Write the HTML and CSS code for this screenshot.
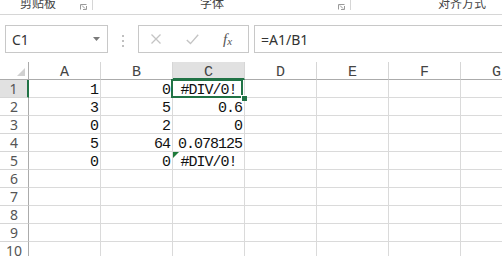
FILE: index.html
```html
<!DOCTYPE html>
<html lang="zh">
<head>
<meta charset="utf-8">
<link rel="stylesheet" href="styles.css">
</head>
<body>
<div class="ribbon">
  <div class="group g1">
    <span class="label">剪贴板</span>
    <svg class="launcher" width="7" height="6" viewBox="0 0 7 6"><path d="M0.5 5.5V0.5H6.5" fill="none" stroke="#9a9a9a"/><path d="M2 1.5L5 4.5" stroke="#9a9a9a"/><path d="M3 5.5H6.5V2" fill="none" stroke="#9a9a9a"/></svg>
  </div>
  <div class="group g2">
    <span class="label">字体</span>
    <svg class="launcher" width="7" height="6" viewBox="0 0 7 6"><path d="M0.5 5.5V0.5H6.5" fill="none" stroke="#9a9a9a"/><path d="M2 1.5L5 4.5" stroke="#9a9a9a"/><path d="M3 5.5H6.5V2" fill="none" stroke="#9a9a9a"/></svg>
  </div>
  <div class="group g3">
    <span class="label">对齐方式</span>
  </div>
</div>

<div class="fbar">
  <div class="namebox">
    <span>C1</span>
    <svg class="caret" width="7" height="4" viewBox="0 0 7 4"><path d="M0 0H7L3.5 4Z" fill="#7a7a7a"/></svg>
  </div>
  <div class="grip"><i></i><i></i><i></i></div>
  <div class="btns">
    <svg width="12" height="10" viewBox="0 0 12 10"><path d="M1.5 0.5L10.5 9.5M10.5 0.5L1.5 9.5" stroke="#c4c4c4" stroke-width="1.3"/></svg>
    <svg width="13" height="11" viewBox="0 0 13 11"><path d="M0.8 6L4.5 9.6L12.2 0.8" fill="none" stroke="#c4c4c4" stroke-width="1.4"/></svg>
    <span class="fx">f<sub>x</sub></span>
  </div>
  <div class="formula">=A1/B1</div>
</div>

<div class="sheet">
  <div class="corner"><span class="tri"></span></div>
  <div class="ch">A</div><div class="ch">B</div><div class="ch sel">C</div><div class="ch">D</div><div class="ch">E</div><div class="ch">F</div><div class="ch">G</div>

  <div class="rh sel">1</div>
  <div class="c num">1</div><div class="c num">0</div><div class="c err active">#DIV/0!<span class="handle"></span></div><div class="c"></div><div class="c"></div><div class="c"></div><div class="c"></div>

  <div class="rh">2</div>
  <div class="c num">3</div><div class="c num">5</div><div class="c num">0.6</div><div class="c"></div><div class="c"></div><div class="c"></div><div class="c"></div>

  <div class="rh">3</div>
  <div class="c num">0</div><div class="c num">2</div><div class="c num">0</div><div class="c"></div><div class="c"></div><div class="c"></div><div class="c"></div>

  <div class="rh">4</div>
  <div class="c num">5</div><div class="c num">64</div><div class="c num">0.078125</div><div class="c"></div><div class="c"></div><div class="c"></div><div class="c"></div>

  <div class="rh">5</div>
  <div class="c num">0</div><div class="c num">0</div><div class="c err flag">#DIV/0!</div><div class="c"></div><div class="c"></div><div class="c"></div><div class="c"></div>

  <div class="rh">6</div>
  <div class="c"></div><div class="c"></div><div class="c"></div><div class="c"></div><div class="c"></div><div class="c"></div><div class="c"></div>
  <div class="rh">7</div>
  <div class="c"></div><div class="c"></div><div class="c"></div><div class="c"></div><div class="c"></div><div class="c"></div><div class="c"></div>
  <div class="rh">8</div>
  <div class="c"></div><div class="c"></div><div class="c"></div><div class="c"></div><div class="c"></div><div class="c"></div><div class="c"></div>
  <div class="rh">9</div>
  <div class="c"></div><div class="c"></div><div class="c"></div><div class="c"></div><div class="c"></div><div class="c"></div><div class="c"></div>
  <div class="rh">10</div>
  <div class="c"></div><div class="c"></div><div class="c"></div><div class="c"></div><div class="c"></div><div class="c"></div><div class="c"></div>
</div>
</body>
</html>
```

FILE: styles.css
```css
html, body {
  margin: 0;
  padding: 0;
  background: #fff;
  overflow: hidden;
  width: 502px;
  height: 256px;
}

body {
  font-family: "Noto Sans", "Noto Sans CJK SC", sans-serif;
  color: #333;
}

/* ribbon strip */
.ribbon {
  display: flex;
  height: 15px;
  border-bottom: 1px solid #d6d6d6;
  box-sizing: border-box;
  overflow: hidden;
}

.group {
  position: relative;
  display: flex;
  align-items: flex-start;
  height: 14px;
  box-sizing: border-box;
}

.group .label {
  font-family: "Noto Sans CJK SC", sans-serif;
  font-size: 12px;
  line-height: 12px;
  color: #444;
  margin-top: -3px;
}

.g1 {
  width: 93px;
  padding-left: 20px;
  border-right: 1px solid #d6d6d6;
  height: 10px;
}

.g2 {
  width: 258px;
  padding-left: 107px;
  border-right: 1px solid #d6d6d6;
  height: 10px;
}

.g3 {
  flex: 1;
  padding-left: 87px;
}

.launcher {
  margin-left: auto;
  margin-right: 5px;
  margin-top: 4px;
}

/* formula bar */
.fbar {
  display: flex;
  height: 28px;
  margin-top: 10px;
}

.namebox {
  width: 103px;
  margin-left: 5px;
  border: 1px solid #c8c8c8;
  box-sizing: border-box;
  display: flex;
  align-items: center;
  padding-left: 6px;
  padding-right: 7px;
  font-size: 14px;
}

.namebox .caret {
  margin-left: auto;
}

.grip {
  width: 30px;
  display: flex;
  flex-direction: column;
  align-items: center;
  justify-content: center;
  gap: 3px;
  padding-top: 3px;
  box-sizing: border-box;
}

.grip i {
  width: 2px;
  height: 2px;
  background: #c0c0c0;
}

.btns {
  width: 111px;
  border: 1px solid #c8c8c8;
  box-sizing: border-box;
  display: flex;
  align-items: center;
  padding-left: 11px;
  gap: 24px;
}

.fx {
  font-family: "Liberation Serif", serif;
  font-style: italic;
  font-size: 15px;
  color: #555;
  margin-left: 0px;
}

.fx sub {
  font-size: 11px;
  vertical-align: -1px;
}

.formula {
  flex: 1;
  margin-left: 5px;
  margin-right: -3px;
  border: 1px solid #c8c8c8;
  box-sizing: border-box;
  display: flex;
  align-items: center;
  padding-left: 6px;
  font-size: 14px;
}

/* sheet grid */
.sheet {
  display: grid;
  grid-template-columns: 29px repeat(7, 72px);
  grid-auto-rows: 18px;
  margin-top: 9px;
}

.sheet > div {
  box-sizing: border-box;
  border-right: 1px solid #dadada;
  border-bottom: 1px solid #dadada;
  position: relative;
  white-space: nowrap;
}

.corner {
  border-right-color: #ababab !important;
  border-bottom-color: #ababab !important;
}

.corner .tri {
  position: absolute;
  right: 3px;
  bottom: 3px;
  width: 0;
  height: 0;
  border-left: 8px solid transparent;
  border-bottom: 8px solid #d0d0d0;
}

.ch {
  text-align: center;
  font-family: "Liberation Mono", monospace;
  font-size: 15px;
  line-height: 18px;
  padding-top: 2px;
  color: #444;
  border-bottom-color: #ababab !important;
  border-right-color: #d6d6d6 !important;
}

.ch.sel {
  background: #e1e1e1;
  border-bottom: 2px solid #217346 !important;
}

.rh {
  text-align: center;
  font-family: "Noto Sans", sans-serif;
  font-size: 14px;
  line-height: 17px;
  color: #555;
  border-right-color: #ababab !important;
  border-bottom-color: #d6d6d6 !important;
}

.rh.sel {
  background: #e1e1e1;
  border-right: 2px solid #217346 !important;
}

.c {
  font-family: "Liberation Mono", monospace;
  font-size: 15px;
  line-height: 18px;
  padding-top: 2px;
  letter-spacing: -1px;
  color: #111;
}

.c.num {
  text-align: right;
  padding-right: 2px;
}

.c.err {
  text-align: center;
}

.c.active::after {
  content: "";
  position: absolute;
  left: -2px;
  top: -1px;
  right: 1px;
  bottom: -1px;
  border: 2px solid #217346;
}

.handle {
  position: absolute;
  right: -3px;
  bottom: -4px;
  width: 5px;
  height: 5px;
  background: #217346;
  border-left: 1px solid #fff;
  border-top: 1px solid #fff;
  z-index: 2;
}

.c.flag::before {
  content: "";
  position: absolute;
  left: 0;
  top: 0;
  width: 0;
  height: 0;
  border-top: 6px solid #1e7a3a;
  border-right: 6px solid transparent;
}
```
